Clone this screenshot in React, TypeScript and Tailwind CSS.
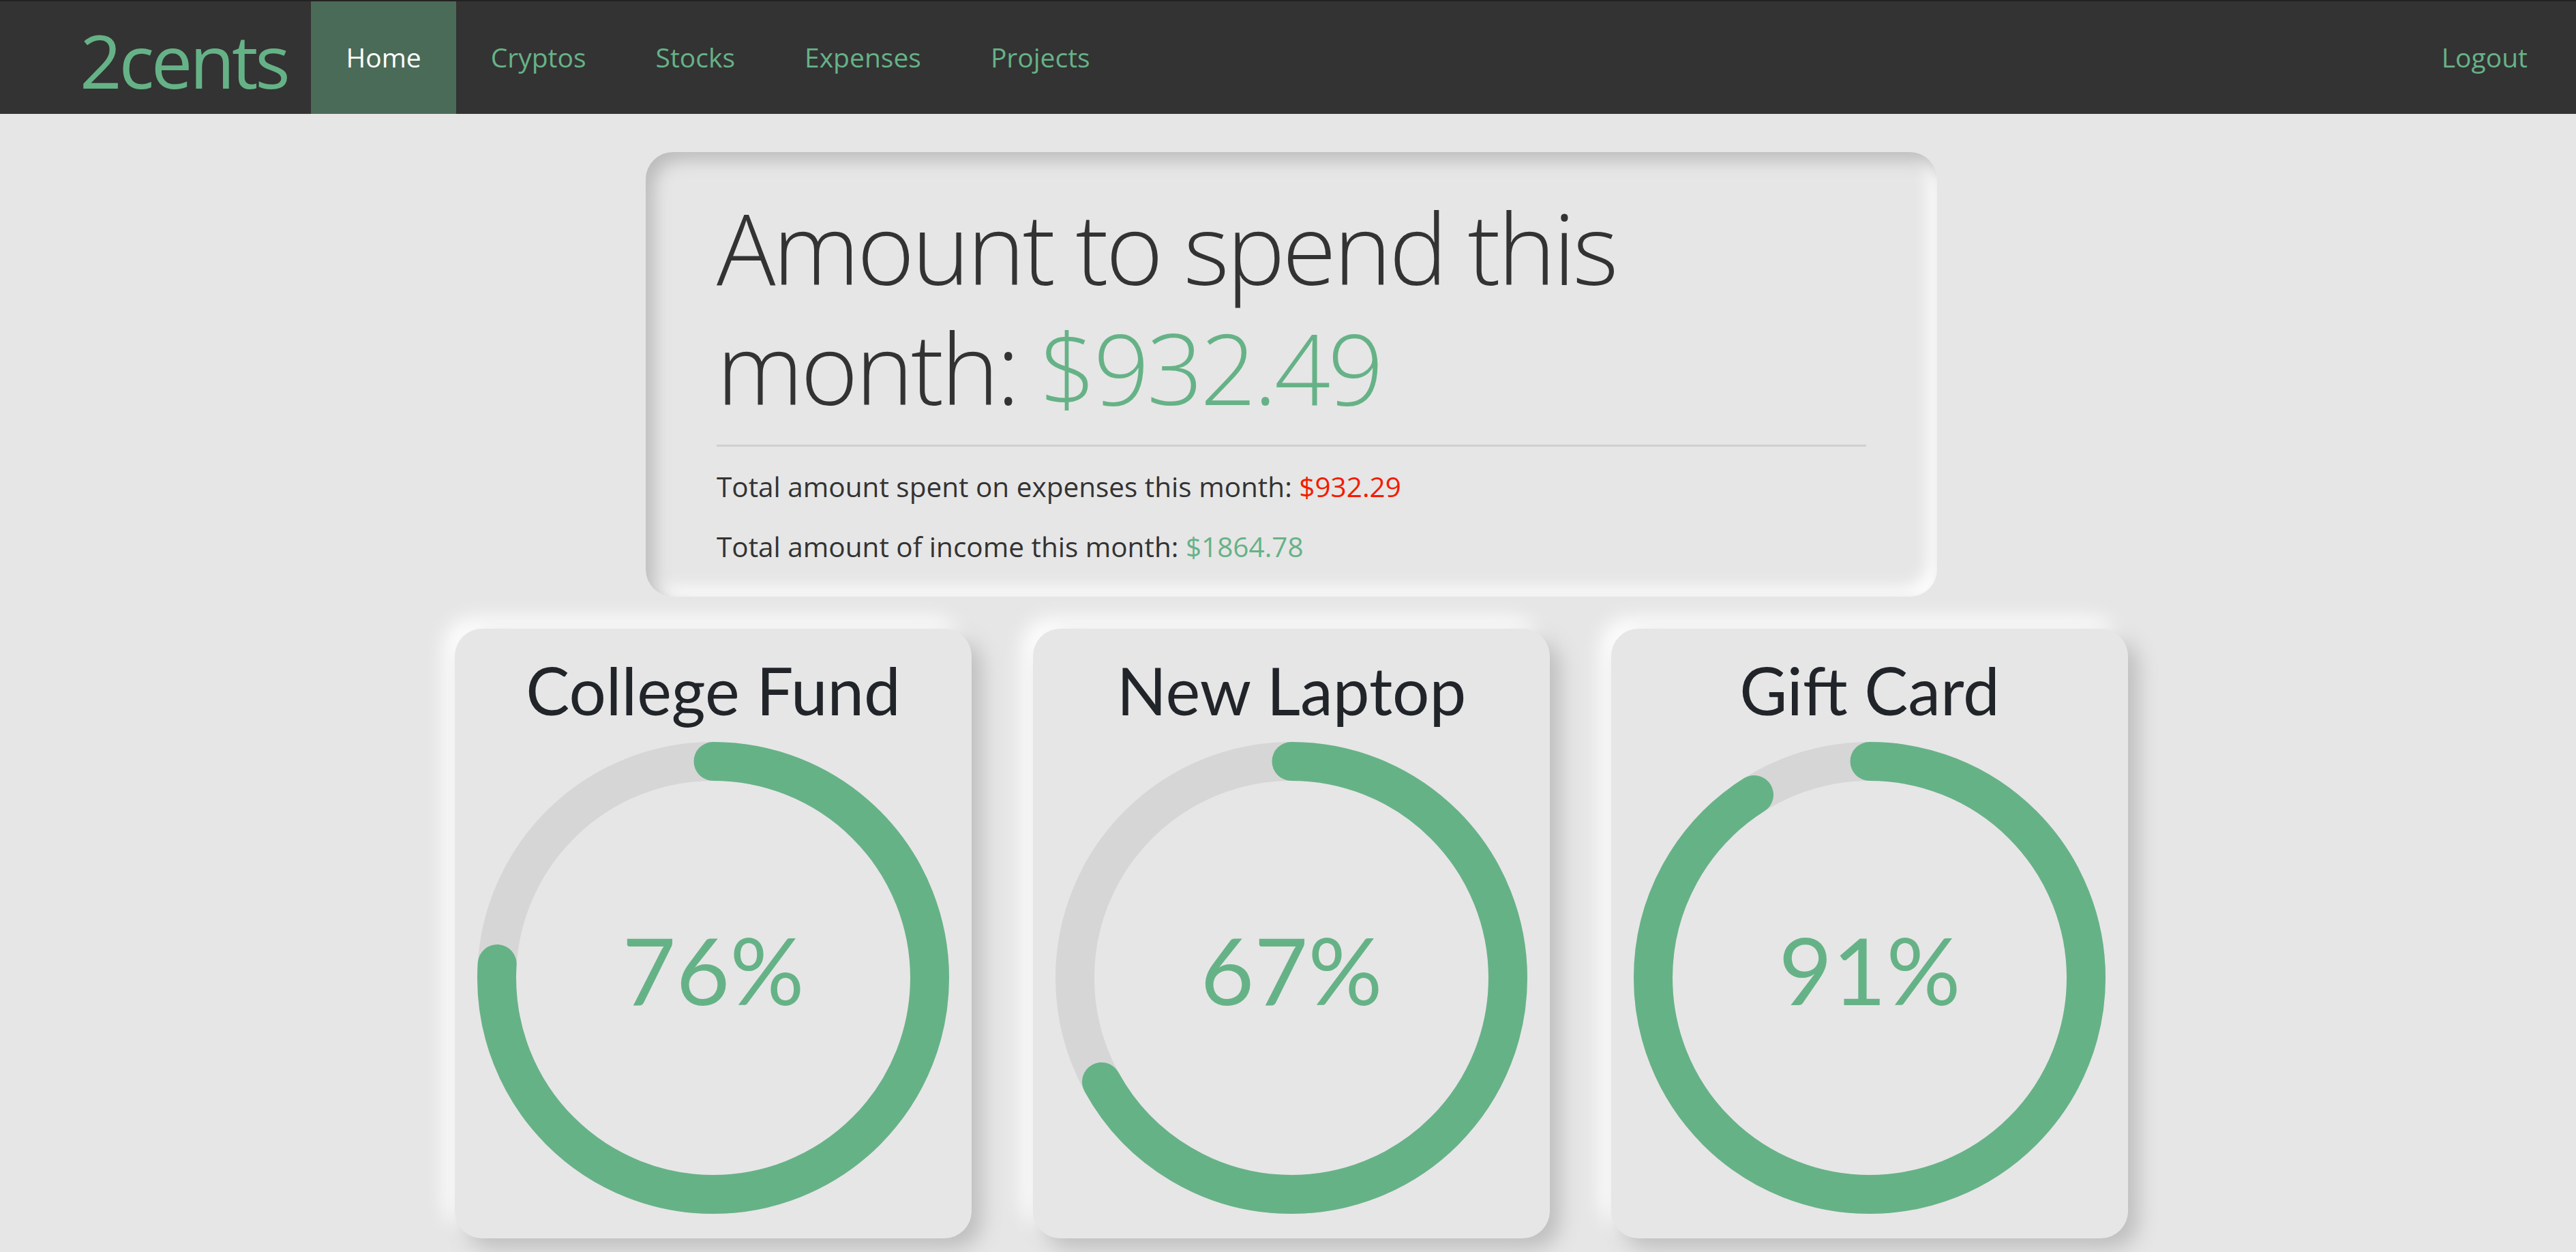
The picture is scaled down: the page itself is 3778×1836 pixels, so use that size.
import React from 'react';

interface Goal {
    name: string;
    percent: number;
}

const goals: Goal[] = [
    { name: 'College Fund', percent: 76 },
    { name: 'New Laptop', percent: 67 },
    { name: 'Gift Card', percent: 91 },
];

const navLinks = ['Home', 'Cryptos', 'Stocks', 'Expenses', 'Projects'];

function ProgressRing({ percent }: { percent: number }) {
    const size = 692;
    const stroke = 57;
    const r = (size - stroke) / 2;
    const circumference = 2 * Math.PI * r;

    return (
        <div className="relative h-[692px] w-[692px]">
            <svg width={size} height={size} viewBox={`0 0 ${size} ${size}`} className="-rotate-90">
                <circle cx={size / 2} cy={size / 2} r={r} fill="none" stroke="#d6d6d6" strokeWidth={stroke} />
                <circle
                    cx={size / 2}
                    cy={size / 2}
                    r={r}
                    fill="none"
                    stroke="#66b287"
                    strokeWidth={stroke}
                    strokeLinecap="round"
                    strokeDasharray={circumference}
                    strokeDashoffset={circumference * (1 - percent / 100)}
                />
            </svg>
            <div className="absolute inset-0 flex items-center justify-center pb-[24px]">
                <span className="font-['Lato',sans-serif] text-[136px] leading-none text-[#66b287]">{percent}%</span>
            </div>
        </div>
    );
}

function GoalCard({ goal }: { goal: Goal }) {
    return (
        <div className="flex w-[758px] flex-col items-center rounded-[40px] bg-[#e6e6e6] px-[33px] pt-[32px] pb-[36px] shadow-[15px_15px_30px_#bebebe,-15px_-15px_30px_#ffffff]">
            <h2 className="mb-[19px] font-['Lato',sans-serif] text-[96px] leading-[115px] text-[#212529]">{goal.name}</h2>
            <ProgressRing percent={goal.percent} />
        </div>
    );
}

export default function App() {
    return (
        <div className="min-h-screen bg-[#e6e6e6] font-['Open_Sans',sans-serif]">
            <nav className="flex h-[167px] items-stretch border-t-2 border-[#222] bg-[#333] pr-[20px] pl-[117px]">
                <a
                    href="#"
                    className="mr-[35px] flex items-center pt-[8px] text-[108px] leading-none tracking-[-0.04em] text-[#66b287]"
                >
                    2cents
                </a>
                {navLinks.map((link) => (
                    <a
                        key={link}
                        href="#"
                        className={`flex items-center px-[51px] text-[39px] ${
                            link === 'Home' ? 'bg-[#4b6b59] text-white' : 'text-[#66b287]'
                        }`}
                    >
                        {link}
                    </a>
                ))}
                <a href="#" className="ml-auto flex items-center px-[51px] text-[39px] text-[#66b287]">
                    Logout
                </a>
            </nav>

            <main className="flex flex-col items-center pt-[56px] pl-[10px]">
                <section className="w-[1894px] rounded-[40px] bg-[#e6e6e6] px-[104px] pt-[51px] pb-[43px] shadow-[inset_12px_12px_24px_#bcbcbc,inset_-12px_-12px_24px_#ffffff]">
                    <h1 className="text-[144px] leading-[176px] font-light tracking-[-0.027em] text-[#333]">
                        Amount to spend this month: <span className="text-[#66b287]">$932.49</span>
                    </h1>
                    <hr className="mt-[26px] mb-[29px] border-t-[3px] border-[#d0d0d0]" />
                    <p className="mb-[28px] text-[40.5px] leading-[60px] text-[#333]">
                        Total amount spent on expenses this month: <span className="text-[#f51b00]">$932.29</span>
                    </p>
                    <p className="text-[40.5px] leading-[60px] text-[#333]">
                        Total amount of income this month: <span className="text-[#66b287]">$1864.78</span>
                    </p>
                </section>

                <div className="mt-[47px] flex gap-[90px]">
                    {goals.map((goal) => (
                        <GoalCard key={goal.name} goal={goal} />
                    ))}
                </div>
            </main>
        </div>
    );
}
